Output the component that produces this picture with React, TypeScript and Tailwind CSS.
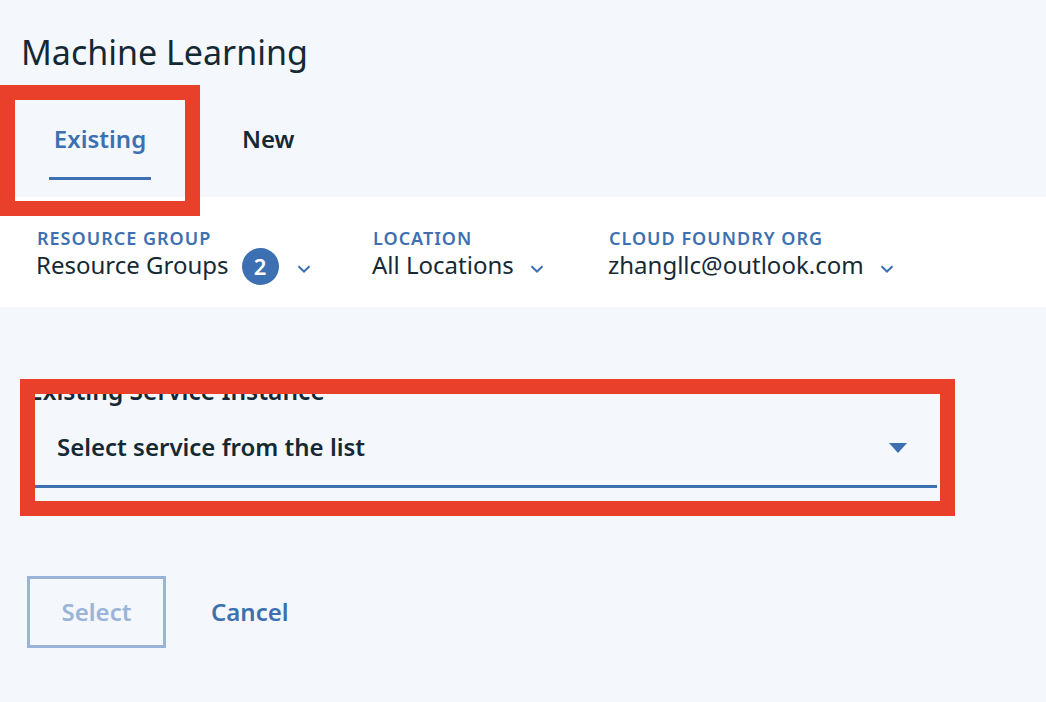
import React from "react";

function Chevron() {
  return (
    <svg width="14" height="8" viewBox="0 0 14 8" fill="none">
      <path d="M1.5 1.2L7 6.5L12.5 1.2" stroke="#3d70b2" strokeWidth="2" />
    </svg>
  );
}

function Filter({
  label,
  value,
  badge,
  width,
}: {
  label: string;
  value: string;
  badge?: string;
  width: string;
}) {
  return (
    <div className={width}>
      <div className="pl-[1px] text-[18px] leading-[20px] font-semibold tracking-[1px] text-[#3d70b2] uppercase">
        {label}
      </div>
      <div className="mt-[2px] flex h-[30px] items-start">
        <span className="text-[24px] leading-[30px] text-[#152935]">{value}</span>
        {badge && (
          <span className="ml-[13px] -mt-[2px] flex h-[37px] w-[37px] items-center justify-center rounded-full bg-[#3d70b2] text-[22px] font-semibold text-white">
            {badge}
          </span>
        )}
        <span className={badge ? "ml-[18px] mt-[15px]" : "ml-[16px] mt-[15px]"}>
          <Chevron />
        </span>
      </div>
    </div>
  );
}

export default function App() {
  return (
    <div className="relative h-[702px] w-[1046px] overflow-hidden bg-[#f4f7fb] font-['Noto_Sans',sans-serif] text-[#152935]">
      <h1 className="pl-[21px] pt-[31px] text-[34px] font-normal leading-[42px]">Machine Learning</h1>

      <div className="flex h-[124px] items-end pb-[17px]">
        <div className="ml-[49px] w-[102px] border-b-[3px] border-[#3d70b2] pb-[23px] text-center text-[24px] font-semibold leading-[30px] text-[#3d70b2]">
          Existing
        </div>
        <div className="ml-[91px] border-b-[3px] border-transparent pb-[23px] text-[24px] font-semibold leading-[30px] text-[#152935]">
          New
        </div>
      </div>

      <div className="flex h-[110px] bg-white pl-[36px] pt-[31px]">
        <Filter width="w-[336px]" label="Resource Group" value="Resource Groups" badge="2" />
        <Filter width="w-[236px]" label="Location" value="All Locations" />
        <Filter width="w-[300px]" label="Cloud Foundry Org" value="zhangllc@outlook.com" />
      </div>

      <div className="pt-[70px]">
        <div className="pl-[29px] text-[24.5px] font-semibold leading-[28px] text-[#152935]">
          Existing Service Instance
        </div>
        <div className="ml-[27px] mt-[3px] flex h-[80px] w-[910px] items-center justify-between border-b-[3px] border-[#3d70b2] pl-[30px] pr-[30px]">
          <span className="text-[24px] font-semibold leading-[30px] text-[#152935]">
            Select service from the list
          </span>
          <svg width="18" height="10" viewBox="0 0 18 10" className="mt-[3px]">
            <polygon points="0,0 18,0 9,10" fill="#3d70b2" />
          </svg>
        </div>

        <div className="ml-[27px] mt-[88px] flex items-center">
          <button className="h-[72px] w-[139px] border-[3px] border-[#9ab4d9] text-[24px] font-semibold text-[#9ab4d9]">
            Select
          </button>
          <button className="ml-[45px] text-[24px] font-semibold text-[#3d70b2]">Cancel</button>
        </div>
      </div>

      <div className="absolute left-0 top-[85px] h-[131px] w-[200px] border-[15px] border-[#e9402b]" />
      <div className="absolute left-[20px] top-[379px] h-[137px] w-[935px] border-[15px] border-[#e9402b]" />
    </div>
  );
}
